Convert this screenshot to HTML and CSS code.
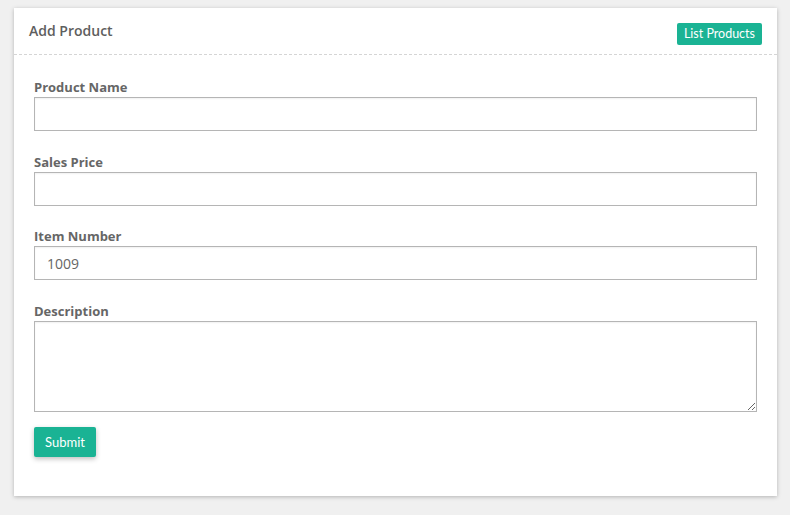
FILE: index.html
```html
<!DOCTYPE html>
<html lang="en">

<head>
  <meta charset="UTF-8">
  <meta name="viewport" content="width=device-width, initial-scale=1.0">
  <title>Add Product</title>
  <link rel="stylesheet" href="styles.css">
</head>

<body>
  <div class="card">
    <div class="card-header">
      <h3 class="card-title">Add Product</h3>
      <button class="btn btn-sm">List Products</button>
    </div>

    <form class="card-body">
      <div class="form-group">
        <label for="productName">Product Name</label>
        <input type="text" id="productName" class="form-control">
      </div>
      <div class="form-group">
        <label for="salesPrice">Sales Price</label>
        <input type="text" id="salesPrice" class="form-control">
      </div>
      <div class="form-group">
        <label for="itemNumber">Item Number</label>
        <input type="text" id="itemNumber" class="form-control" value="1009">
      </div>
      <div class="form-group">
        <label for="description">Description</label>
        <textarea id="description" class="form-control textarea"></textarea>
      </div>
      <button type="submit" class="btn btn-submit">Submit</button>
    </form>
  </div>
</body>

</html>
```

FILE: styles.css
```css
body {
  background-color: #f0f0f0;
  font-family: 'Open Sans', sans-serif;
  margin: 0;
  padding: 8px 13px 20px 14px;
}

.card {
  background-color: #fff;
  box-shadow: 0 1px 4px rgba(0, 0, 0, 0.25);
}

.card-header {
  display: flex;
  align-items: center;
  justify-content: space-between;
  height: 46px;
  padding: 0 15px;
  border-bottom: 1px dashed #d5d5d5;
}

.card-title {
  margin: 0;
  font-size: 14px;
  font-weight: 600;
  color: #5e5e5e;
  padding-bottom: 2px;
}

.btn {
  border: none;
  border-radius: 2px;
  background-color: #1ab394;
  color: #fff;
  font-family: 'Lato', sans-serif;
  cursor: pointer;
}

.btn-sm {
  height: 22px;
  padding: 0 7px;
  font-size: 12.5px;
  margin-top: 5px;
}

.card-body {
  padding: 23px 20px 39px 20px;
}

.form-group {
  margin-bottom: 21.5px;
}

.form-group label {
  display: block;
  font-size: 13px;
  font-weight: 700;
  line-height: 18px;
  color: #666;
  margin-bottom: 1px;
}

.form-control {
  display: block;
  box-sizing: border-box;
  width: 100%;
  height: 34px;
  padding: 0 12px;
  border: 1px solid #b5b5b5;
  border-radius: 0;
  font-family: 'Open Sans', sans-serif;
  font-size: 14px;
  color: #666;
  box-shadow: inset 0 1px 2px rgba(0, 0, 0, 0.06);
}

.textarea {
  height: 91px;
  padding: 6px 12px;
  resize: vertical;
}

.form-group:last-of-type {
  margin-bottom: 15px;
}

.btn-submit {
  height: 30px;
  padding: 0 11px;
  font-size: 13px;
  box-shadow: 0 2px 5px rgba(0, 0, 0, 0.25);
}
```
